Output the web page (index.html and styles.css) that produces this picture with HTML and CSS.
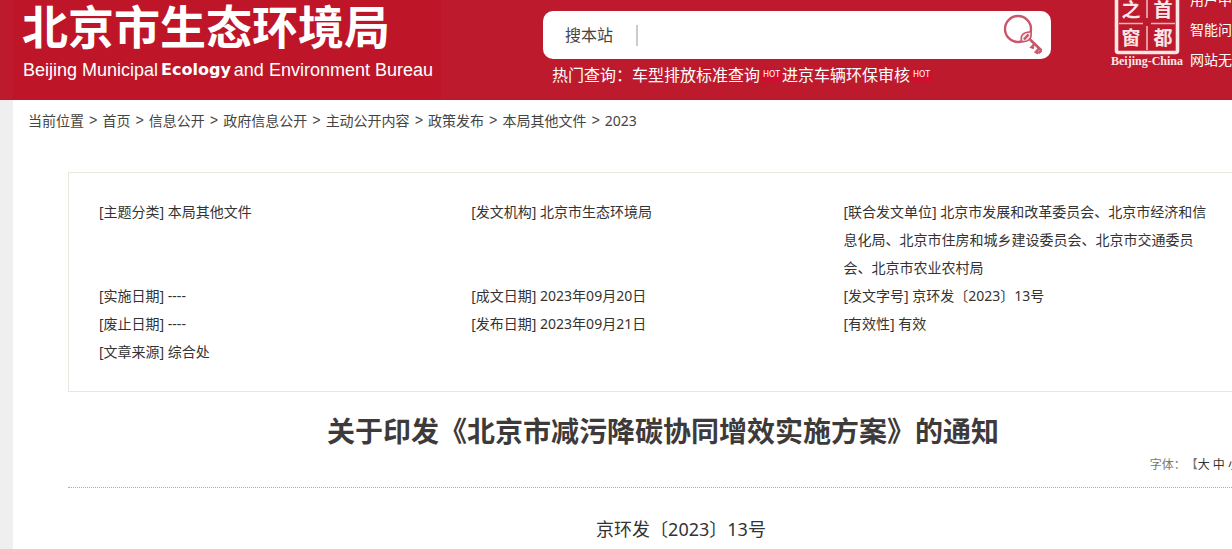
FILE: index.html
```html
<!DOCTYPE html>
<html lang="zh-CN">
<head>
	<meta charset="utf-8">
	<title>关于印发《北京市减污降碳协同增效实施方案》的通知</title>
	<link rel="stylesheet" href="styles.css">
</head>
<body>
	<header class="header">
		<div class="logo">
			<h1 class="logo-cn">北京市生态环境局</h1>
			<p class="logo-en">Beijing Municipal <b>Ecology</b> and Environment Bureau</p>
		</div>
		<div class="search">
			<form class="search-form">
				<label for="keyword">搜本站</label>
				<input type="text" id="keyword" class="search-text">
				<button type="submit" class="search-btn" aria-label="搜索">
					<svg width="42" height="42" viewBox="0 0 42 42" fill="none" stroke="#c9566a">
						<circle cx="15" cy="15" r="13" stroke-width="2.4"/>
						<path d="M18.500 27.500c-1.500-6 2-10 9.500-9.500c1 6.500-2.500 10.500-9.500 9.500z" fill="#fbe3e6" stroke-width="1.600"/>
						<path d="M21 25.500l4.500-5" stroke-width="2.400"/>
						<path d="M27 25.500L38.500 36.500" stroke-width="2.600"/>
						<path d="M31.500 30l-3 3.200l2.500 1M36 34.500l-3.200 3.500l2.500 1.500M38.500 36.500l-3 2.500" stroke-width="2.400"/>
					</svg>
				</button>
			</form>
			<p class="hot">
				<span>热门查询：</span>
				<a href="#">车型排放标准查询</a><i>HOT</i>
				<a href="#">进京车辆环保审核</a><i>HOT</i>
			</p>
		</div>
		<a class="seal" href="#">
			<svg width="74" height="72" viewBox="0 0 74 72">
				<path d="M6.500 -4V50.500Q6.500 52.500 8.500 52.500H65.500Q67.500 52.500 67.500 50.500V-4" fill="none" stroke="#fae6e6" stroke-width="3.600"/>
				<path d="M37 0V18M37 26V50M9 23.500H33M41 23.500H65" stroke="#f0b4b8" stroke-width="1.600"/>
				<g class="seal-cn">
					<text x="21" y="17">之</text>
					<text x="53" y="17">首</text>
					<text x="21" y="45">窗</text>
					<text x="53" y="45">都</text>
				</g>
				<text class="seal-en" x="37" y="65">Beijing-China</text>
			</svg>
		</a>
		<nav class="tools">
			<a href="#">用户中心</a>
			<a href="#">智能问答</a>
			<a href="#">网站无障碍</a>
		</nav>
	</header>

	<main class="main">
		<nav class="crumb">
			<span>当前位置</span> <s>&gt;</s>
			<a href="#">首页</a> <s>&gt;</s>
			<a href="#">信息公开</a> <s>&gt;</s>
			<a href="#">政府信息公开</a> <s>&gt;</s>
			<a href="#">主动公开内容</a> <s>&gt;</s>
			<a href="#">政策发布</a> <s>&gt;</s>
			<a href="#">本局其他文件</a> <s>&gt;</s>
			<a href="#">2023</a>
		</nav>
		<article class="article">
			<ul class="info">
				<li>[主题分类] 本局其他文件</li>
				<li>[发文机构] 北京市生态环境局</li>
				<li>[联合发文单位] 北京市发展和改革委员会、北京市经济和信息化局、北京市住房和城乡建设委员会、北京市交通委员会、北京市农业农村局</li>
				<li>[实施日期] ----</li>
				<li>[成文日期] 2023年09月20日</li>
				<li>[发文字号] 京环发〔2023〕13号</li>
				<li>[废止日期] ----</li>
				<li>[发布日期] 2023年09月21日</li>
				<li>[有效性] 有效</li>
				<li>[文章来源] 综合处</li>
			</ul>
			<h2 class="title">关于印发《北京市减污降碳协同增效实施方案》的通知</h2>
			<div class="fontsize">字体：【<a href="#">大</a> <a href="#">中</a> <a href="#">小</a>】</div>
			<p class="number">京环发〔2023〕13号</p>
		</article>
	</main>
</body>
</html>
```
FILE: styles.css
```css
*{
	margin: 0;
	padding: 0;
	box-sizing: border-box;
}
body{
	background: #efefef;
	color: #333;
	font: 14px/28px "Noto Sans", "Noto Sans CJK SC", sans-serif;
	overflow-x: hidden;
	text-spacing-trim: space-all;
}
a{
	color: inherit;
	text-decoration: none;
}
ul{
	list-style: none;
}

/* 头部 */
.header{
	display: flex;
	min-width: 1313px;
	height: 100px;
	padding-left: 13px;
	background: #bd1b2d;
	color: #fff;
	overflow: hidden;
}
.logo{
	width: 428px;
	padding-left: 9px;
	background: #be1628;
}
.logo-cn{
	font-size: 46px;
	line-height: 52px;
}
.logo-en{
	display: flex;
	gap: 3px;
	padding-left: 1px;
	font: 18px/36px "Liberation Sans", sans-serif;
	white-space: nowrap;
}
.logo-en b{
	font: bold 16px/36px "DejaVu Sans", sans-serif;
}
.search{
	width: 508px;
	margin-left: 102px;
	padding-top: 11px;
}
.search-form{
	display: flex;
	align-items: center;
	height: 48px;
	padding: 0 6px 0 22px;
	background: #fff;
	border-radius: 10px;
	color: #444;
	font-size: 16px;
}
.search-text{
	flex: 1;
	height: 21px;
	margin-left: 23px;
	padding-left: 10px;
	border: 0;
	border-left: 2px solid #ccc;
	outline: 0;
	font-size: 16px;
}
.search-btn{
	width: 42px;
	height: 42px;
	border: 0;
	background: none;
	cursor: pointer;
}
.search-btn svg{
	display: block;
}
.hot{
	display: flex;
	align-items: center;
	padding-left: 9px;
	font-size: 16px;
	line-height: 32px;
	white-space: nowrap;
}
.hot i{
	width: 21px;
	margin-left: 1px;
	background: #d6092e;
	border-radius: 2px;
	font: 8px/12px "DejaVu Sans", sans-serif;
	text-align: center;
}
.seal{
	margin-left: 59px;
}
.seal svg{
	display: block;
}
.seal text{
	fill: #fae6e6;
	text-anchor: middle;
}
.seal-cn{
	font: bold 19px "Noto Sans CJK SC", sans-serif;
}
.seal-en{
	font: bold 12px "Liberation Serif", serif;
}
.tools{
	margin: -15px 0 0 6px;
	line-height: 30px;
	white-space: nowrap;
}
.tools a{
	display: block;
}

/* 正文 */
.main{
	min-width: 1300px;
	min-height: 449px;
	margin-left: 13px;
	background: #fff;
}
.crumb{
	display: flex;
	gap: 5px;
	padding: 7px 15px;
	color: #444;
}
.crumb s{
	font-family: "Liberation Mono", monospace;
	text-decoration: none;
}
.article{
	padding: 30px 55px 0;
}
.info{
	display: grid;
	grid-template-columns: repeat(3, 33%);
	padding: 25px 30px;
	border: 1px solid #e8e8df;
}
.title{
	padding-top: 19px;
	color: #3e3a39;
	font-size: 28px;
	line-height: 40px;
	text-align: center;
}
.fontsize{
	padding: 4px 6px 12px;
	border-bottom: 1px dotted #aaa;
	color: #777;
	font-size: 12px;
	line-height: 20px;
	text-align: right;
}
.fontsize a{
	color: #333;
}
.number{
	padding-top: 26px;
	font-size: 18px;
	line-height: 30px;
	text-align: center;
	text-indent: 2em;
}
```
